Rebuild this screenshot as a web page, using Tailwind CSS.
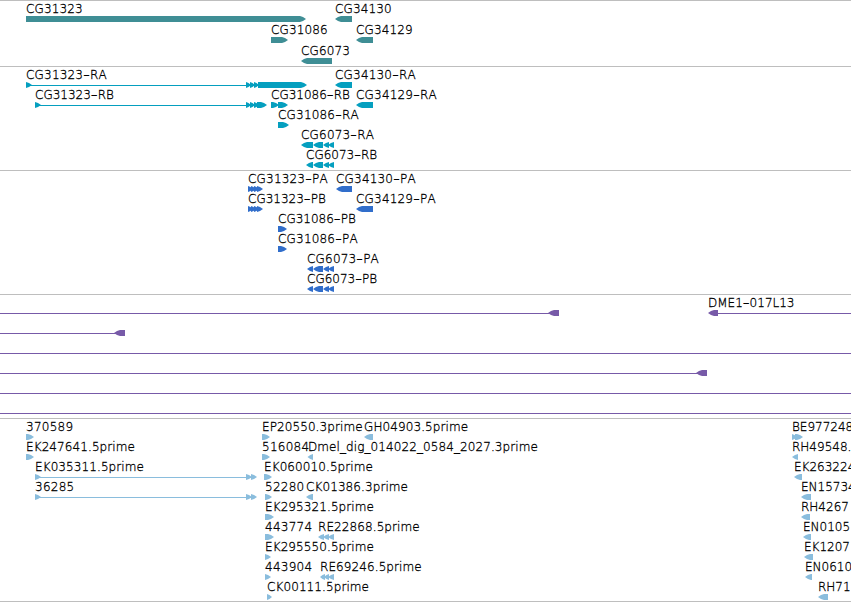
<!DOCTYPE html>
<html lang="en">
<head>
<meta charset="utf-8">
<title>Genome tracks</title>
<script src="https://cdn.jsdelivr.net/npm/@tailwindcss/browser@4"></script>
</head>
<body class="bg-white overflow-hidden">
<main id="tracks" class="flex w-[851px] h-[602px] flex-col overflow-hidden border-b border-[#bebebe] bg-white text-[12px] text-black font-['DejaVu_Sans',sans-serif] [font-kerning:none]"></main>
<script>
// Feature: [row, label, label x, segments, optional connector [from, to]]
// Segment: [start, end, strand]
const R = 1, L = -1;
const tracks = [
  { name: 'Genes', color: '#3f8e95', height: 66, step: 21, features: [
    [0, 'CG31323', 26, [[26, 306, R]]],
    [0, 'CG34130', 335, [[335, 352, L]]],
    [1, 'CG31086', 271, [[271, 288, R]]],
    [1, 'CG34129', 356, [[356, 373, L]]],
    [2, 'CG6073', 301, [[301, 332, L]]]
  ]},
  { name: 'Transcripts', color: '#059fbf', height: 104, step: 20, features: [
    [0, 'CG31323-RA', 26, [[26, 32, R], [246, 251, R], [250, 255, R], [254, 259, R], [258, 307, R]], [26, 258]],
    [0, 'CG34130-RA', 335, [[335, 352, L]]],
    [1, 'CG31323-RB', 35, [[35, 41, R], [246, 251, R], [250, 255, R], [254, 259, R], [257, 267, R]], [35, 258]],
    [1, 'CG31086-RB', 271, [[271, 279, R], [278, 288, R]]],
    [1, 'CG34129-RA', 356, [[356, 373, L]]],
    [2, 'CG31086-RA', 278, [[278, 289, R]]],
    [3, 'CG6073-RA', 301, [[301, 313, L], [313, 323, L], [323, 329, L], [328, 334, L]]],
    [4, 'CG6073-RB', 306, [[306, 313, L], [313, 323, L], [323, 329, L], [328, 334, L]]]
  ]},
  { name: 'Proteins', color: '#316ecb', height: 124, step: 20, features: [
    [0, 'CG31323-PA', 248, [[248, 253, R], [251, 256, R], [254, 259, R], [257, 263, R]]],
    [0, 'CG34130-PA', 336, [[336, 352, L]]],
    [1, 'CG31323-PB', 248, [[248, 253, R], [251, 256, R], [254, 259, R], [257, 263, R]]],
    [1, 'CG34129-PA', 356, [[356, 373, L]]],
    [2, 'CG31086-PB', 278, [[278, 287, R]]],
    [3, 'CG31086-PA', 278, [[278, 287, R]]],
    [4, 'CG6073-PA', 307, [[307, 313, L], [313, 323, L], [323, 329, L], [328, 334, L]]],
    [5, 'CG6073-PB', 307, [[307, 313, L], [313, 323, L], [323, 329, L], [328, 334, L]]]
  ]},
  { name: 'BACs', color: '#775aa8', height: 124, step: 20, features: [
    [0, '', 0, [[548, 559, L]], [0, 555]],
    [0, 'DME1-017L13', 708, [[708, 718, L]], [714, 851]],
    [1, '', 0, [[114, 125, L]], [0, 120]],
    [2, '', 0, [], [0, 851]],
    [3, '', 0, [[696, 707, L]], [0, 702]],
    [4, '', 0, [], [0, 851]],
    [5, '', 0, [], [0, 851]]
  ]},
  { name: 'ESTs', color: '#8abddd', height: 183, step: 20, features: [
    [0, '370589', 26, [[26, 34, R]]],
    [0, 'EP20550.3prime', 262, [[262, 270, R]]],
    [0, 'GH04903.5prime', 364, [[364, 373, L]]],
    [0, 'BE977248', 792, [[792, 797, R], [795, 803, R]]],
    [1, 'EK247641.5prime', 26, [[26, 34, R]]],
    [1, '516084', 262, [[262, 270, R]]],
    [1, 'Dmel_dig_014022_0584_2027.3prime', 308, [[307.5, 313, L]]],
    [1, 'RH49548.', 792, [[792, 798, L]]],
    [2, 'EK035311.5prime', 35, [[35, 41, R], [246, 252, R], [251, 257, R]], [35, 252]],
    [2, 'EK060010.5prime', 264, [[264, 272, R]]],
    [2, 'EK263224', 794, [[794, 802, L]]],
    [3, '36285', 35, [[35, 41, R], [246, 252, R], [251, 257, R]], [35, 252]],
    [3, '52280', 265, [[265, 272, R]]],
    [3, 'CK01386.3prime', 306, [[306, 313, L]]],
    [3, 'EN15734', 801, [[801, 811, L]]],
    [4, 'EK295321.5prime', 265, [[265, 274, R]]],
    [4, 'RH4267', 801, [[801, 810, L]]],
    [5, '443774', 265, [[265, 274, R]]],
    [5, 'RE22868.5prime', 318, [[318, 324, L], [323, 329, L], [328, 334, L]]],
    [5, 'EN0105', 803, [[803, 811, L]]],
    [6, 'EK295550.5prime', 265, [[265, 271, R]]],
    [6, 'EK1207', 804, [[804, 813, L]]],
    [7, '443904', 265, [[265, 271, R]]],
    [7, 'RE69246.5prime', 320, [[320, 325, L], [324, 329, L], [328, 334, L]]],
    [7, 'EN0610', 805, [[805, 812, L]]],
    [8, 'CK00111.5prime', 267, [[267, 272, R]]],
    [8, 'RH71', 818, [[818, 828, L]]]
  ]}
];

function arrow([a, b, strand], y, color) {
  const tip = Math.min(6, b - a);
  const p = strand === R
    ? [[a, y], [b - tip, y], [b - tip / 2, y + 1], [b, y + 3], [b - tip / 2, y + 5], [b - tip, y + 6], [a, y + 6]]
    : [[b, y], [a + tip, y], [a + tip / 2, y + 1], [a, y + 3], [a + tip / 2, y + 5], [a + tip, y + 6], [b, y + 6]];
  return `<polygon points="${p.join(' ')}" fill="${color}"/>`;
}

// Letter spacing in px for each family of identifiers
function tracking(label) {
  if (/^\d+$/.test(label)) return 0.25;
  if (/-[RP]A$/.test(label)) return 0.19;
  if (/^CG\d+$/.test(label)) return 0.15;
  if (/prime$/.test(label)) return 0.09;
  return 0;
}

// The hyphen is drawn as a wide dash
function caption(x, y, label) {
  const text = label.replace('-', '<tspan textLength="6.8" lengthAdjust="spacingAndGlyphs">-</tspan>');
  return `<text x="${x}" y="${y}" style="letter-spacing:${tracking(label)}px">${text}</text>`;
}

document.getElementById('tracks').innerHTML = tracks.map(t => {
  const body = t.features.map(([row, label, x, segs, link]) => {
    const y = row * t.step;
    return (link ? `<rect x="${link[0]}" y="${y + 18}" width="${link[1] - link[0]}" height="1" fill="${t.color}"/>` : '')
      + segs.map(s => arrow(s, y + 15, t.color)).join('')
      + (label ? caption(x, y + 12, label) : '');
  }).join('');
  return `<section aria-label="${t.name}" class="shrink-0 border-t border-[#bebebe]"><svg class="block font-extralight [&_text]:stroke-black [&_text]:stroke-[0.3px]" width="851" height="${t.height - 1}">${body}</svg></section>`;
}).join('');
</script>
</body>
</html>
